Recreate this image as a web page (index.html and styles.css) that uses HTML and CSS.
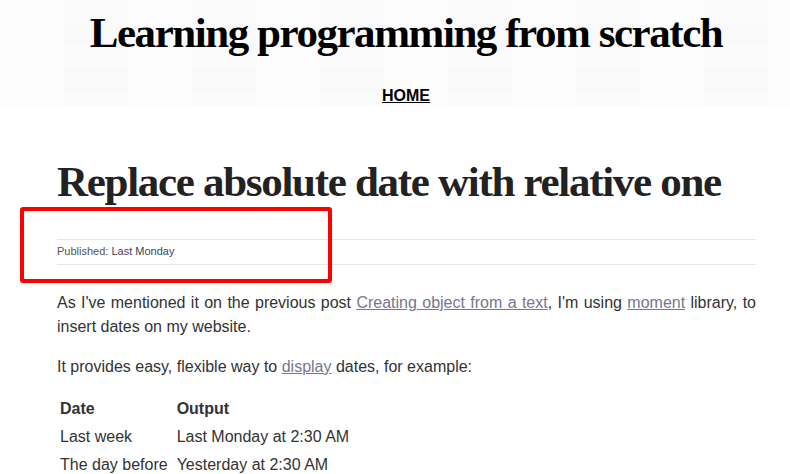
FILE: index.html
```html
<!DOCTYPE html>
<html>
<head>
<meta charset="utf-8">
<link rel="stylesheet" href="styles.css">
</head>
<body>
<header class="site-header">
  <h1 class="site-title">Learning programming from scratch</h1>
  <nav class="nav"><a href="#">HOME</a></nav>
</header>
<main class="content">
  <h2 class="post-title">Replace absolute date with relative one</h2>
  <div class="meta">Published: <span class="meta-date">Last Monday</span></div>
  <p>As I've mentioned it on the previous post <a href="#">Creating object from a text</a>, I'm using <a href="#">moment</a> library, to insert dates on my website.</p>
  <p>It provides easy, flexible way to <a href="#">display</a> dates, for example:</p>
  <table class="dates">
    <thead><tr><th>Date</th><th>Output</th></tr></thead>
    <tbody>
      <tr><td>Last week</td><td>Last Monday at 2:30 AM</td></tr>
      <tr><td>The day before</td><td>Yesterday at 2:30 AM</td></tr>
    </tbody>
  </table>
</main>
<div class="highlight"></div>
</body>
</html>
```
FILE: styles.css
```css
html, body {
  margin: 0;
  padding: 0;
  background: #fff;
}
body {
  font-family: "Liberation Sans", Arial, sans-serif;
  color: #333;
  overflow: hidden;
  height: 474px;
  position: relative;
}
.site-header {
  height: 106px;
  background-color: #fbfbfb;
  background-image:
    linear-gradient(90deg, rgba(255,255,255,0.3) 50%, rgba(0,0,0,0.004) 50%),
    linear-gradient(180deg, rgba(255,255,255,0.3) 50%, rgba(0,0,0,0.004) 50%);
  background-size: 128px 100%, 100% 46px;
  text-align: center;
  padding: 10px 0 0 22px;
  box-sizing: border-box;
}
.site-title {
  margin: 0;
  font-family: "Liberation Serif", "Times New Roman", serif;
  font-weight: bold;
  font-size: 43px;
  letter-spacing: -1.45px;
  line-height: 46px;
  color: #000;
}
.nav {
  margin-top: 31px;
}
.nav a {
  font-weight: bold;
  font-size: 16px;
  color: #000;
  text-decoration: underline;
}
.content {
  margin: 0 34px 0 57px;
}
.post-title {
  margin: 52px 0 0;
  font-family: "Liberation Serif", "Times New Roman", serif;
  font-weight: bold;
  font-size: 43px;
  letter-spacing: -1.3px;
  line-height: 48px;
  color: #222;
}
.meta {
  margin-top: 33px;
  border-top: 1px solid #e6e6e6;
  border-bottom: 1px solid #e6e6e6;
  padding: 5px 0 6px;
  font-size: 11px;
  line-height: 13px;
  color: #555;
}
.meta-date {
  color: #445;
}
p {
  margin: 16px 0 0;
  font-size: 16px;
  line-height: 24px;
  text-align: justify;
}
.meta + p {
  margin-top: 26px;
}
a {
  color: #7a7591;
}
.dates {
  margin-top: 16px;
  border-collapse: collapse;
  font-size: 16px;
}
.dates th, .dates td {
  text-align: left;
  padding: 3px 6px 3px 3px;
  line-height: 22px;
}
.highlight {
  position: absolute;
  left: 20px;
  top: 207px;
  width: 304px;
  height: 68px;
  border: 4px solid #ff0000;
  border-radius: 3px;
}
```
